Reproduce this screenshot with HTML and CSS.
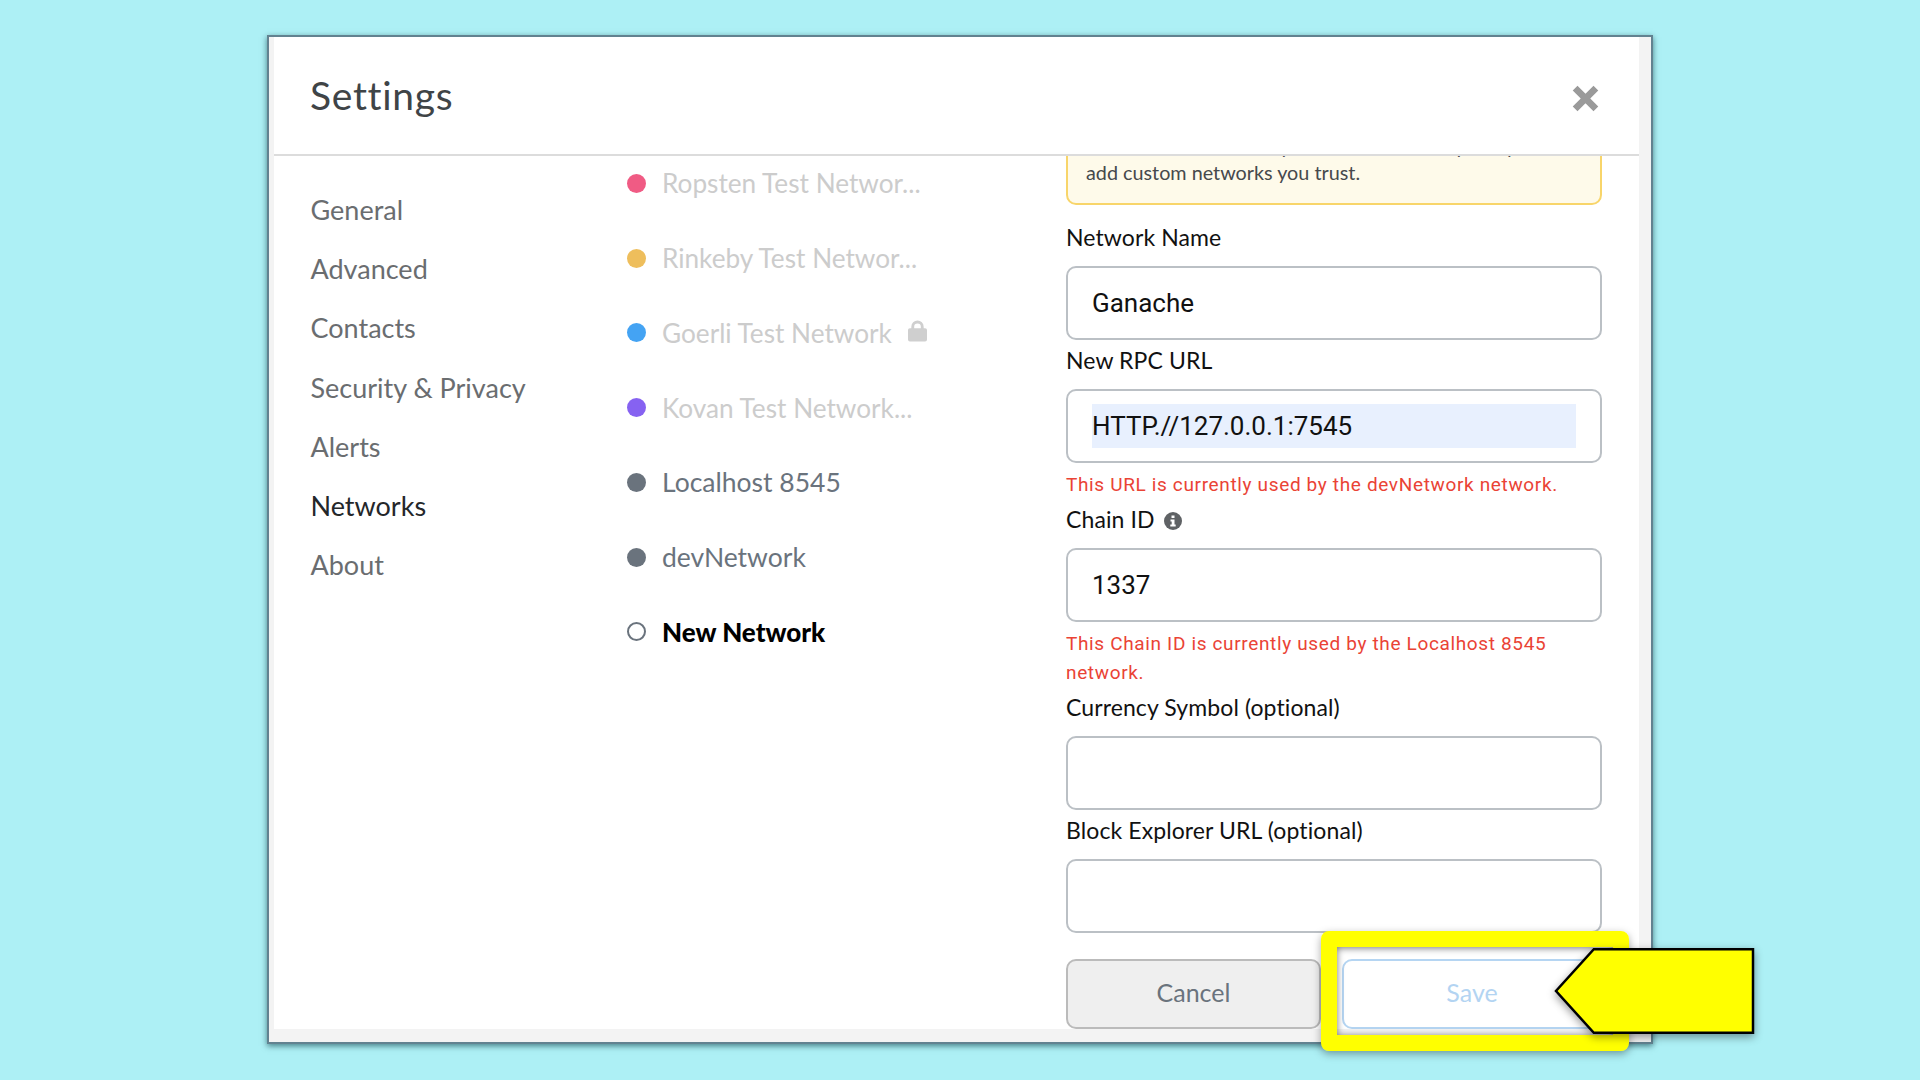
FILE: index.html
```html
<!DOCTYPE html>
<html lang="en">
<head>
<meta charset="utf-8">
<title>Settings</title>
<link rel="stylesheet" href="styles.css">
</head>
<body>
<main class="window">
  <div class="panel">
    <header class="head">
      <h1 class="title">Settings</h1>
      <svg class="close" viewBox="0 0 26 26" aria-label="Close"><path d="M3 3 23 23M23 3 3 23"/></svg>
    </header>
    <div class="body">
      <nav class="nav">
        <a>General</a><a>Advanced</a><a>Contacts</a><a>Security &amp; Privacy</a><a>Alerts</a><a class="on">Networks</a><a>About</a>
      </nav>
      <ul class="nets">
        <li class="off"><i class="dot pink"></i>Ropsten Test Networ...</li>
        <li class="off"><i class="dot gold"></i>Rinkeby Test Networ...</li>
        <li class="off"><i class="dot blue"></i>Goerli Test Network
          <svg class="lock" viewBox="0 0 20 22"><path d="M3.500 8V6.500a6.500 6.500 0 0 1 13 0V8h1.500a2 2 0 0 1 2 2v10a2 2 0 0 1-2 2H2a2 2 0 0 1-2-2V10a2 2 0 0 1 2-2Zm3 0h7V6.500a3.500 3.500 0 0 0-7 0Z"/></svg></li>
        <li class="off"><i class="dot violet"></i>Kovan Test Network...</li>
        <li><i class="dot grey"></i>Localhost 8545</li>
        <li><i class="dot grey"></i>devNetwork</li>
        <li class="new"><i class="dot ring"></i>New Network</li>
      </ul>
      <form class="form">
        <div class="warn">blockchain and record your network activity. Only<br>add custom networks you trust.</div>
        <label class="label first">Network Name</label>
        <div class="field">Ganache</div>
        <label class="label">New RPC URL</label>
        <div class="field"><span class="fill">HTTP.//127.0.0.1:7545</span></div>
        <p class="error">This URL is currently used by the devNetwork network.</p>
        <label class="label">Chain ID
          <svg class="info" viewBox="0 0 18 18"><circle cx="9" cy="9" r="9"/><path class="glyph" d="M7.500 3.500h3v2.500h-3ZM6.500 7.500h4v5h1.200v2H6.300v-2h1.400v-3H6.500Z"/></svg></label>
        <div class="field">1337</div>
        <p class="error wrapped">This Chain ID is currently used by the Localhost 8545 network.</p>
        <label class="label">Currency Symbol (optional)</label>
        <div class="field"></div>
        <label class="label">Block Explorer URL (optional)</label>
        <div class="field"></div>
        <div class="actions">
          <button type="button" class="btn cancel">Cancel</button>
          <button type="button" class="btn save">Save</button>
        </div>
      </form>
    </div>
  </div>
</main>
<div class="frame"></div>
<svg class="arrow" viewBox="0 0 200 86"><polygon points="39,1 199,1 199,85 39,85 1,43"/></svg>
</body>
</html>
```
FILE: styles.css
```css
* { box-sizing: border-box; }
html, body { margin: 0; height: 100%; }
body {
  position: relative;
  width: 1920px;
  height: 1080px;
  overflow: hidden;
  background: #adf0f5;
  padding: 35px 0 0 267px;
  font-family: Lato, "Liberation Sans", sans-serif;
}
.window {
  width: 1386px;
  height: 1009px;
  background: #f3f3f3;
  border: 2px solid #628290;
  box-shadow: 0 2px 6px rgba(0, 50, 60, .6);
  padding: 0 12px 13px 5px;
}
.panel {
  height: 100%;
  background: #fff;
  display: flex;
  flex-direction: column;
}
.head {
  flex: none;
  height: 119px;
  border-bottom: 2px solid #dcdcdc;
  padding: 0 40px 0 36px;
  display: flex;
  justify-content: space-between;
  align-items: center;
}
.title {
  margin: 0 0 2px;
  font-size: 39px;
  letter-spacing: .7px;
  font-weight: 400;
  color: #3f4447;
}
.close {
  width: 27px;
  height: 27px;
  margin-top: 6px;
  fill: none;
  stroke: #9a9a9a;
  stroke-width: 6.500;
}
.body {
  flex: 1;
  min-height: 0;
  display: flex;
  overflow: hidden;
}
.nav {
  width: 353px;
  flex: none;
  padding: 24px 0 0 36.500px;
  display: flex;
  flex-direction: column;
}
.nav a {
  height: 59.200px;
  line-height: 59px;
  font-size: 27px;
  color: #6a6d70;
}
.nav a.on { color: #24272a; }
.nets {
  width: 440px;
  flex: none;
  margin: -10px 0 0;
  padding: 0;
  list-style: none;
}
.nets li {
  height: 74.750px;
  display: flex;
  align-items: center;
  gap: 16px;
  font-size: 26.500px;
  color: #6a737d;
}
.nets li.off { color: #cccccc; font-size: 26.200px; }
.nets li.new { color: #000; font-size: 26px; font-weight: 900; }
.dot {
  width: 19px;
  height: 19px;
  border-radius: 50%;
  flex: none;
}
.pink { background: #e91550; opacity: .7; }
.gold { background: #ebb33f; opacity: .85; }
.blue { background: #3099f2; opacity: .9; }
.violet { background: #7f5af0; opacity: .95; }
.grey { background: #6a737d; }
.ring { background: #fff; border: 2px solid #6a737d; }
.lock { width: 19px; height: 22px; margin: -3px 0 0; fill: #cfcfcf; }
.form {
  width: 536px;
  flex: none;
  margin-left: -1px;
  display: flex;
  flex-direction: column;
}
.warn {
  height: 85px;
  margin-top: -36px;
  padding: 11px 18px 0;
  background: #fefaea;
  border: 2px solid #f8d56a;
  border-radius: 10px;
  font-size: 19.800px;
  line-height: 26px;
  color: #46494c;
  white-space: nowrap;
  flex: none;
}
.label {
  display: block;
  height: 49px;
  line-height: 40px;
  font-size: 23px;
  letter-spacing: .1px;
  color: #111;
  flex: none;
}
.label.first { margin-top: 12px; }
.info { width: 18px; height: 18px; margin-left: 3px; vertical-align: -2px; fill: #5f6265; }
.info .glyph { fill: #fff; }
.field {
  height: 74px;
  flex: none;
  border: 2px solid #bbc0c5;
  border-radius: 10px;
  padding: 13px 24px;
  display: flex;
  align-items: center;
  font-family: Roboto, sans-serif;
  font-size: 26px;
  color: #111;
}
.fill {
  flex: 1;
  align-self: stretch;
  display: flex;
  align-items: center;
  background: #e8f0fe;
}
.error {
  margin: 7px 0 0;
  font-family: Roboto, sans-serif;
  font-size: 19px;
  line-height: 29px;
  letter-spacing: .65px;
  color: #ea4335;
  flex: none;
}
.error.wrapped { padding-right: 40px; }
.actions {
  margin-top: 26px;
  display: flex;
  gap: 21px;
  flex: none;
}
.btn {
  height: 70px;
  border-radius: 10px;
  font-family: Lato, sans-serif;
  font-size: 25px;
  padding: 0 0 4px;
}
.cancel {
  width: 255px;
  background: #efefef;
  border: 2px solid #bbbbbb;
  color: #6a737d;
}
.save {
  width: 260px;
  background: #fff;
  border: 2px solid #b5d5f2;
  color: #b3d4f2;
}
.frame {
  position: absolute;
  left: 1321px;
  top: 931px;
  width: 308px;
  height: 120px;
  border: 16px solid #ffff00;
  border-radius: 8px;
  box-shadow: 0 3px 8px rgba(0, 0, 0, .35), inset 0 1px 7px rgba(0, 0, 0, .55);
}
.arrow {
  position: absolute;
  left: 1555px;
  top: 948px;
  width: 199px;
  height: 86px;
  overflow: visible;
  filter: drop-shadow(0 3px 4px rgba(0, 0, 0, .4));
}
.arrow polygon {
  fill: #ffff00;
  stroke: #000;
  stroke-width: 2.500;
}
```
